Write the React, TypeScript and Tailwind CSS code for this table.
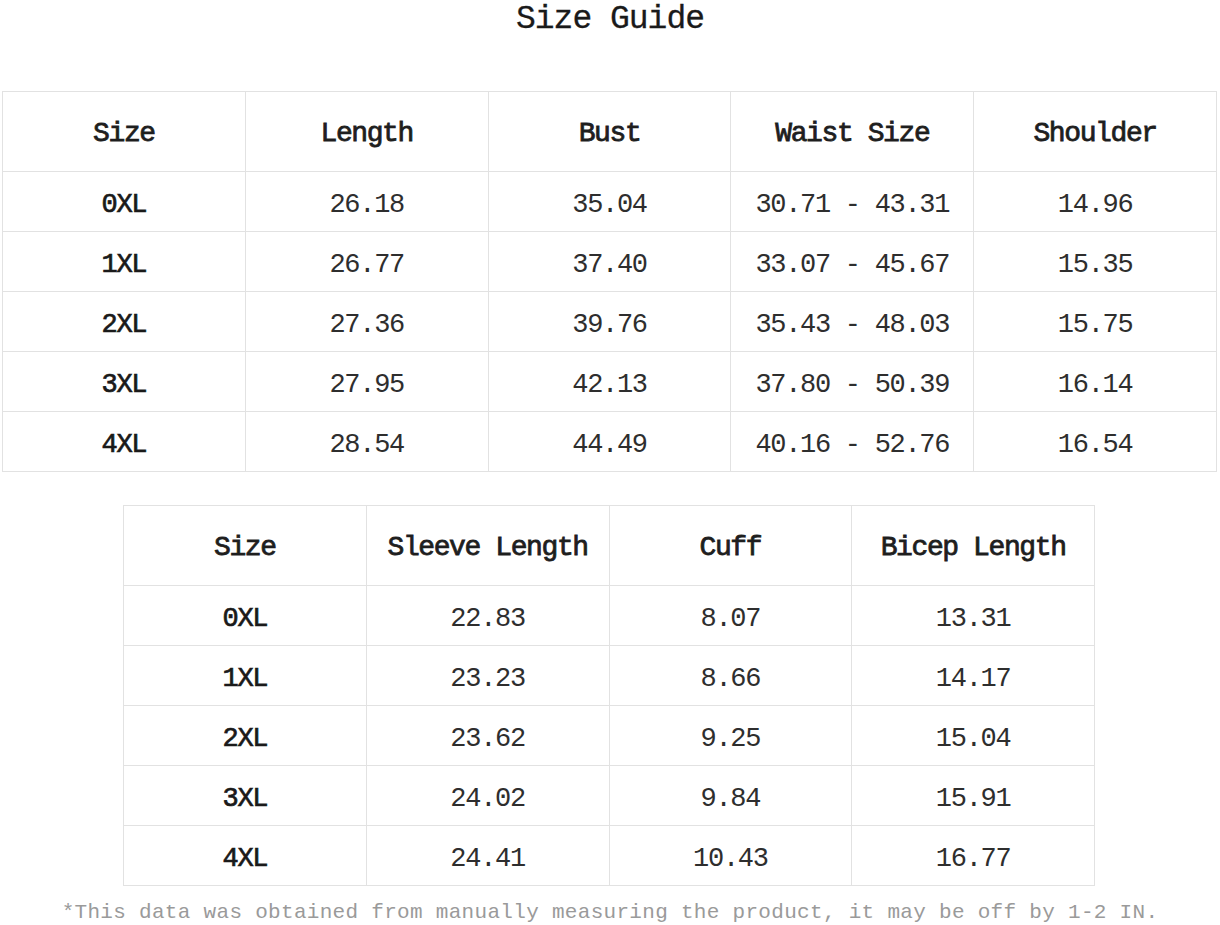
import React from 'react'

const mono = { fontFamily: '"Liberation Mono", "Noto Sans CJK SC", monospace' }

type Row = string[]

const bodyRows: Row[] = [
  ['0XL', '26.18', '35.04', '30.71 - 43.31', '14.96'],
  ['1XL', '26.77', '37.40', '33.07 - 45.67', '15.35'],
  ['2XL', '27.36', '39.76', '35.43 - 48.03', '15.75'],
  ['3XL', '27.95', '42.13', '37.80 - 50.39', '16.14'],
  ['4XL', '28.54', '44.49', '40.16 - 52.76', '16.54'],
]

const sleeveRows: Row[] = [
  ['0XL', '22.83', '8.07', '13.31'],
  ['1XL', '23.23', '8.66', '14.17'],
  ['2XL', '23.62', '9.25', '15.04'],
  ['3XL', '24.02', '9.84', '15.91'],
  ['4XL', '24.41', '10.43', '16.77'],
]

const SizeTable: React.FC<{ headers: string[]; rows: Row[] }> = ({ headers, rows }) => {
  return (
    <table className="border-collapse table-fixed" style={{ width: headers.length * 243 }}>
      <thead>
        <tr className="h-[80px]">
          {headers.map((h) => (
            <th
              key={h}
              className="border border-[#e2e2e2] text-center font-normal pt-[4px] text-[28px] tracking-[-1.4px] text-[#1e1e1e] [-webkit-text-stroke:0.8px_#1e1e1e]"
            >
              {h}
            </th>
          ))}
        </tr>
      </thead>
      <tbody>
        {rows.map((r) => (
          <tr key={r[0]} className="h-[60px]">
            {r.map((c, i) => (
              <td
                key={i}
                className={
                  'border border-[#e2e2e2] text-center pt-[7px] text-[27px] tracking-[-1.3px] ' +
                  (i === 0
                    ? 'text-[#1a1a1a] [-webkit-text-stroke:0.7px_#1a1a1a]'
                    : 'text-[#2e2e2e]')
                }
              >
                {c}
              </td>
            ))}
          </tr>
        ))}
      </tbody>
    </table>
  )
}

export default function App() {
  return (
    <div className="w-[1220px] h-[925px] bg-white overflow-hidden" style={mono}>
      <h1 className="text-center pt-[2px] text-[33px] leading-[36px] tracking-[-1px] text-[#1a1a1a] [-webkit-text-stroke:0.3px_#1a1a1a]">
        Size Guide
      </h1>

      <div className="mt-[53px] pl-[2px]">
        <SizeTable headers={['Size', 'Length', 'Bust', 'Waist Size', 'Shoulder']} rows={bodyRows} />
      </div>

      <div className="mt-[33px] pl-[123px]">
        <SizeTable headers={['Size', 'Sleeve Length', 'Cuff', 'Bicep Length']} rows={sleeveRows} />
      </div>

      <p className="mt-[11px] text-center text-[21px] tracking-[0.3px] text-[#9a9a9a] whitespace-nowrap">
        *This data was obtained from manually measuring the product, it may be off by 1-2 IN.
      </p>
    </div>
  )
}
